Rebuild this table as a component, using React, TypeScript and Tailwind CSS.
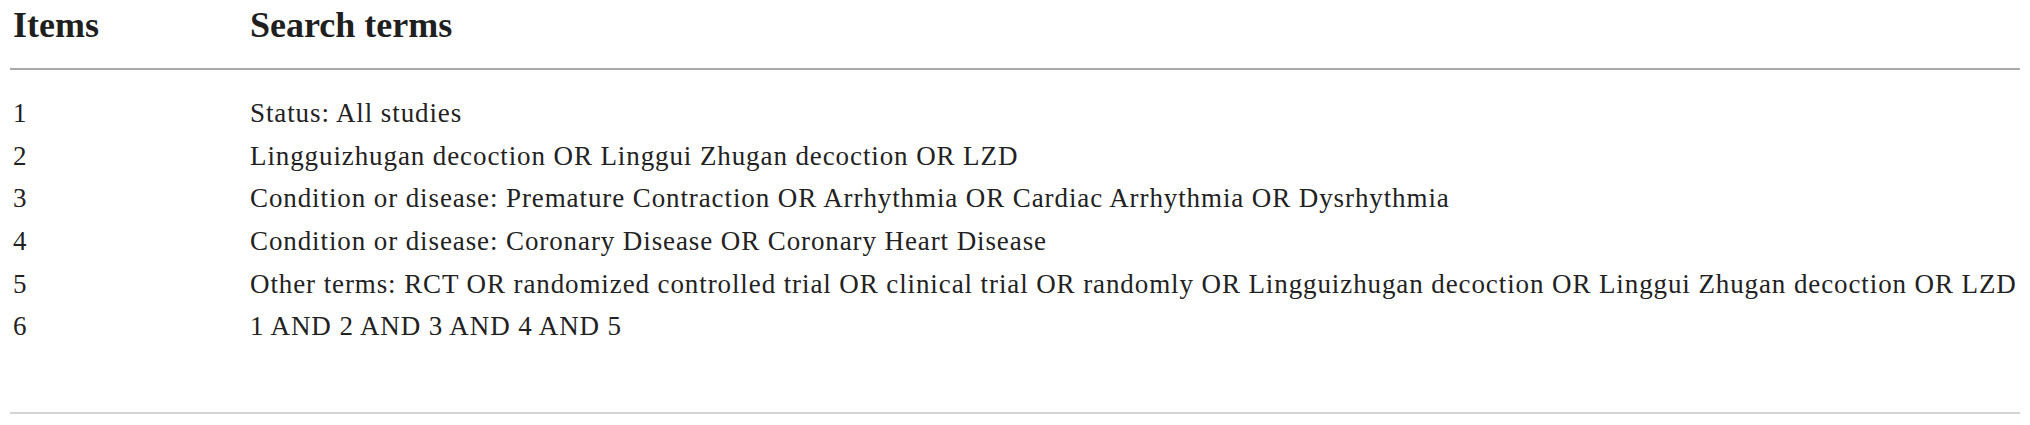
import React from 'react';

const rows: { item: string; terms: string }[] = [
    { item: '1', terms: 'Status: All studies' },
    { item: '2', terms: 'Lingguizhugan decoction OR Linggui Zhugan decoction OR LZD' },
    { item: '3', terms: 'Condition or disease: Premature Contraction OR Arrhythmia OR Cardiac Arrhythmia OR Dysrhythmia' },
    { item: '4', terms: 'Condition or disease: Coronary Disease OR Coronary Heart Disease' },
    { item: '5', terms: 'Other terms: RCT OR randomized controlled trial OR clinical trial OR randomly OR Lingguizhugan decoction OR Linggui Zhugan decoction OR LZD' },
    { item: '6', terms: '1 AND 2 AND 3 AND 4 AND 5' },
];

const App: React.FC = () => {
    return (
        <div className="w-[2030px] h-[425px] bg-white px-[10px] font-['Liberation_Serif',serif] text-[#222]">
            <div className="flex pt-[5px] pb-[23px] border-b-2 border-[#a9a9a9] text-[36px] leading-[40px] font-bold text-[#1f1f1f]">
                <div className="w-[240px] pl-[3px]">Items</div>
                <div>Search terms</div>
            </div>
            <div className="pt-[22px] pb-[64px] border-b-2 border-[#d4d4d4]">
                {rows.map(r => (
                    <div key={r.item} className="flex h-[42.7px] text-[27px] leading-[42.7px] tracking-[0.9px] whitespace-nowrap">
                        <div className="w-[240px] pl-[3px]">{r.item}</div>
                        <div>{r.terms}</div>
                    </div>
                ))}
            </div>
        </div>
    );
};

export default App;
